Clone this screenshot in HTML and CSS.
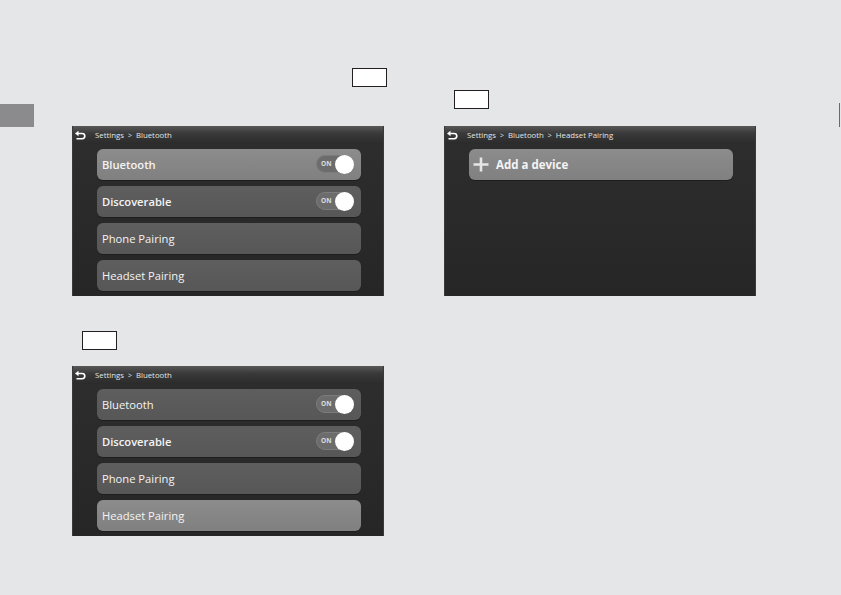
FILE: index.html
```html
<!DOCTYPE html>
<html>

<head>
    <meta charset="utf-8">
    <title>Bluetooth headset pairing</title>
    <link rel="stylesheet" href="styles.css">
</head>

<body>

    <div class="thumb-tab"></div>
    <div class="edge-mark"></div>

    <section class="spread">

        <!-- left column: step 1 and step 3 -->
        <div class="column left">
            <div class="key key-top"></div>

            <div class="screen">
                <div class="crumbs">
                    <svg class="back" width="12" height="10" viewBox="0 0 12 10">
                        <path d="M4.5 0.8 L1 3.5 L4.5 6.2 Z" fill="#fff"/>
                        <path d="M3 3.5 H8.2 A2.6 2.6 0 0 1 8.2 8.7 H2.5" fill="none" stroke="#fff" stroke-width="1.6"/>
                    </svg>
                    <span>Settings</span><span class="sep">&gt;</span><span>Bluetooth</span>
                </div>
                <div class="list">
                    <div class="row lit bold">Bluetooth
                        <div class="switch"><span>ON</span><i></i></div>
                    </div>
                    <div class="row bold">Discoverable
                        <div class="switch"><span>ON</span><i></i></div>
                    </div>
                    <div class="row">Phone Pairing</div>
                    <div class="row">Headset Pairing</div>
                </div>
            </div>

            <div class="key key-mid"></div>

            <div class="screen">
                <div class="crumbs">
                    <svg class="back" width="12" height="10" viewBox="0 0 12 10">
                        <path d="M4.5 0.8 L1 3.5 L4.5 6.2 Z" fill="#fff"/>
                        <path d="M3 3.5 H8.2 A2.6 2.6 0 0 1 8.2 8.7 H2.5" fill="none" stroke="#fff" stroke-width="1.6"/>
                    </svg>
                    <span>Settings</span><span class="sep">&gt;</span><span>Bluetooth</span>
                </div>
                <div class="list">
                    <div class="row">Bluetooth
                        <div class="switch"><span>ON</span><i></i></div>
                    </div>
                    <div class="row bold">Discoverable
                        <div class="switch"><span>ON</span><i></i></div>
                    </div>
                    <div class="row">Phone Pairing</div>
                    <div class="row lit">Headset Pairing</div>
                </div>
            </div>
        </div>

        <!-- right column: step 2 -->
        <div class="column right">
            <div class="key key-side"></div>

            <div class="screen">
                <div class="crumbs">
                    <svg class="back" width="12" height="10" viewBox="0 0 12 10">
                        <path d="M4.5 0.8 L1 3.5 L4.5 6.2 Z" fill="#fff"/>
                        <path d="M3 3.5 H8.2 A2.6 2.6 0 0 1 8.2 8.7 H2.5" fill="none" stroke="#fff" stroke-width="1.6"/>
                    </svg>
                    <span>Settings</span><span class="sep">&gt;</span><span>Bluetooth</span><span class="sep">&gt;</span><span>Headset Pairing</span>
                </div>
                <div class="list">
                    <div class="row lit add">
                        <svg class="plus" width="16" height="15" viewBox="0 0 16 15">
                            <path d="M8 0.5 V14.5 M0.5 7.5 H15.5" stroke="#e6e6e6" stroke-width="2.6"/>
                        </svg>
                        Add a device
                    </div>
                </div>
            </div>
        </div>

    </section>

</body>

</html>
```

FILE: styles.css
```css
/* General styles */

html {
    background-color: #e5e6e8;
    font-family: "Open Sans", "Noto Sans", sans-serif;
}

body {
    margin: 0;
    width: 841px;
    height: 595px;
    overflow: hidden;
}

* {
    box-sizing: border-box;
}

/* page markers on the edges */

.thumb-tab {
    position: absolute;
    left: 0;
    top: 104px;
    width: 34px;
    height: 23px;
    background-color: #8b8b8d;
}

.edge-mark {
    position: absolute;
    left: 839px;
    top: 103px;
    width: 1px;
    height: 24px;
    background-color: #6a6a6a;
}

/* Layout */

.spread {
    display: flex;
    gap: 60px;
    padding-left: 72px;
}

.column {
    width: 312px;
    display: flex;
    flex-direction: column;
}

.left {
    padding-top: 68px;
}

.right {
    padding-top: 90px;
}

/* empty key boxes */

.key {
    width: 35px;
    height: 19px;
    border: 1.5px solid #231f20;
    background-color: #fff;
}

.key-top {
    margin-left: 280px;
    margin-bottom: 39px;
}

.key-mid {
    margin: 35px 0 16px 10px;
}

.key-side {
    margin: 0 0 17px 10px;
}

/* display screens */

.screen {
    width: 312px;
    height: 170px;
    background: linear-gradient(#2e2e2e, #262626);
    border-left: 1px solid #3a3a3a;
    border-right: 1px solid #3a3a3a;
}

.crumbs {
    height: 18px;
    display: flex;
    align-items: center;
    gap: 3px;
    padding-left: 1px;
    font-size: 7.8px;
    color: #e4e4e4;
    background: linear-gradient(#585858, #3a3a3a 40%, #2b2b2b);
}

.crumbs .back {
    margin-right: 6px;
    margin-top: -1px;
}

.crumbs .sep {
    margin: 0 1px;
    font-size: 7px;
}

.list {
    display: flex;
    flex-direction: column;
    gap: 6.3px;
    padding: 4.5px 0 0 24px;
}

.row {
    width: 264px;
    height: 31px;
    border-radius: 6px;
    padding-left: 5px;
    display: flex;
    align-items: center;
    justify-content: space-between;
    font-size: 11.2px;
    color: #f4f4f4;
    background: linear-gradient(#5e5e5e, #575757);
    box-shadow: 0 1px 0 #1e1e1e;
}

.row.bold {
    font-weight: 600;
}

.row.lit {
    background: linear-gradient(#8c8c8c, #808080);
}

.row.add {
    justify-content: flex-start;
    gap: 7px;
    padding-left: 4px;
    font-size: 11.5px;
    font-weight: 700;
}

/* on/off switch */

.switch {
    position: relative;
    width: 38px;
    height: 18px;
    margin-right: 7px;
    border-radius: 9px;
    background-color: #6c6c6c;
    border: 1px solid #7c7c7c;
}

.switch span {
    position: absolute;
    left: 4px;
    top: 3px;
    font-size: 6.5px;
    font-weight: 700;
    color: #dcdcdc;
}

.switch i {
    position: absolute;
    right: -1px;
    top: -1px;
    width: 19px;
    height: 19px;
    border-radius: 50%;
    background-color: #fff;
}
```
